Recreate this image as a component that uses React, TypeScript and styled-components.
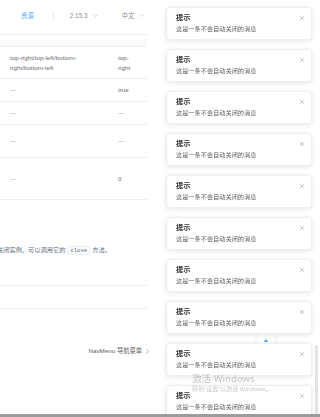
import React from "react";
import styled, { createGlobalStyle } from "styled-components";

const GlobalStyle = createGlobalStyle`
  html, body {
    margin: 0;
    padding: 0;
    background: #ffffff;
    overflow: hidden;
  }
  body {
    font-family: "Liberation Sans", Arial, "Noto Sans CJK SC", sans-serif;
    -webkit-font-smoothing: antialiased;
  }
  * { box-sizing: border-box; }
`;

const Page = styled.div`
  width: 320px;
  height: 417px;
  display: flex;
  flex-direction: row;
  overflow: hidden;
`;

const Main = styled.main`
  width: 147px;
  display: flex;
  flex-direction: column;
`;

/* ---------- header ---------- */
const Header = styled.header`
  height: 35px;
  border-bottom: 1px solid #ebeef5;
  display: flex;
  align-items: center;
  padding: 0 0 4px 21px;
  font-size: 6.4px;
`;

const NavLink = styled.span<{ $active?: boolean }>`
  color: ${(p) => (p.$active ? "#5aa9f5" : "#8a8f99")};
  white-space: nowrap;
`;

const NavSep = styled.span`
  width: 1px;
  height: 7px;
  background: #e4e7ed;
  margin: 0 16px 0 19px;
`;

const NavDrop = styled.span<{ $gap?: number }>`
  display: flex;
  align-items: center;
  gap: 5px;
  margin-right: ${(p) => p.$gap ?? 0}px;
`;

const Caret = () => (
  <svg width="5" height="3" viewBox="0 0 5 3">
    <polyline points="0.4,0.4 2.5,2.5 4.6,0.4" fill="none" stroke="#b4b8bf" strokeWidth="0.7" />
  </svg>
);

/* ---------- tables ---------- */
const Table = styled.div<{ $top: number }>`
  margin-top: ${(p) => p.$top}px;
  display: flex;
  flex-direction: column;
`;

const HeadBand = styled.div<{ $h: number; $bg?: string }>`
  height: ${(p) => p.$h}px;
  background: ${(p) => p.$bg ?? "transparent"};
  border-bottom: 1px solid #ebeef5;
`;

const Row = styled.div<{ $h: number }>`
  height: ${(p) => p.$h}px;
  display: grid;
  grid-template-columns: 108px 39px;
  align-items: center;
  border-bottom: 1px solid #ebeef5;
  font-size: 6.25px;
  line-height: 10px;
  color: #6b6e75;
`;

const Cell = styled.div<{ $pr: number }>`
  padding: 0 ${(p) => p.$pr}px 0 10px;
  overflow-wrap: break-word;
`;

const Dash = styled.span`
  color: #a0a3aa;
`;

/* ---------- paragraph ---------- */
const Para = styled.p`
  margin: 45px 0 0 -3px;
  white-space: nowrap;
  font-size: 6.23px;
  line-height: 10px;
  color: #5e6d82;
`;

const Code = styled.code`
  font-family: "Liberation Mono", Menlo, monospace;
  font-size: 5.6px;
  color: #5e6d82;
  background: #f9fafc;
  border: 1px solid #eaeefb;
  border-radius: 2px;
  padding: 0 2px;
  margin: 0 2px;
`;

/* ---------- footer nav ---------- */
const FooterNav = styled.div`
  margin-top: 37px;
  width: 149px;
  display: flex;
  justify-content: flex-end;
  align-items: center;
  gap: 4px;
  font-size: 6.25px;
  line-height: 10px;
  color: #606266;
`;

const RightArrow = () => (
  <svg width="3" height="5" viewBox="0 0 3 5">
    <polyline points="0.4,0.4 2.5,2.5 0.4,4.6" fill="none" stroke="#8a8f99" strokeWidth="0.7" />
  </svg>
);

/* ---------- overlays ---------- */
const BackTop = styled.div`
  position: fixed;
  left: 257px;
  top: 331px;
  width: 18px;
  height: 18px;
  border-radius: 50%;
  background: #fff;
  box-shadow: 0 0 4px rgba(0, 0, 0, 0.12);
  display: flex;
  align-items: center;
  justify-content: center;
  z-index: 1;
`;

const Stack = styled.div`
  position: fixed;
  top: 7px;
  right: 8px;
  width: 146px;
  display: flex;
  flex-direction: column;
  gap: 9px;
  z-index: 2;
`;

const Card = styled.div`
  height: 33px;
  flex: none;
  display: flex;
  align-items: flex-start;
  padding: 4px 7px 0 9px;
  background: #fff;
  border: 1px solid #ebeef5;
  border-radius: 4px;
  box-shadow: 0 1px 5px rgba(0, 0, 0, 0.1);
`;

const Group = styled.div`
  flex: 1;
  display: flex;
  flex-direction: column;
  gap: 2px;
`;

const Title = styled.div`
  font-family: "Noto Sans CJK SC", sans-serif;
  font-weight: 700;
  font-size: 7.2px;
  line-height: 10px;
  color: #303133;
`;

const Content = styled.div`
  font-family: "Noto Sans CJK SC", sans-serif;
  font-size: 6.2px;
  line-height: 9px;
  color: #606266;
  white-space: nowrap;
`;

const Close = styled.span`
  display: flex;
  margin-top: 4px;
`;

const CloseIcon = () => (
  <svg width="4" height="4" viewBox="0 0 4 4">
    <path d="M0.3 0.3L3.7 3.7M3.7 0.3L0.3 3.7" stroke="#a8abb2" strokeWidth="0.7" />
  </svg>
);

const ScrollThumb = styled.div`
  position: fixed;
  left: 315px;
  top: 345px;
  width: 3px;
  height: 70px;
  background: #e3e3e3;
  border-radius: 1px;
  z-index: 3;
`;

const Watermark = styled.div`
  position: fixed;
  left: 192px;
  top: 372px;
  display: flex;
  flex-direction: column;
  font-family: "Noto Sans", "Noto Sans CJK SC", sans-serif;
  color: rgba(150, 150, 150, 0.55);
  pointer-events: none;
  z-index: 4;
`;

const WmTitle = styled.span`
  font-size: 9.6px;
  line-height: 13px;
`;

const WmSub = styled.span`
  font-size: 6px;
  line-height: 9px;
  white-space: nowrap;
`;

const BottomEdge = styled.div`
  position: fixed;
  left: 0;
  right: 0;
  bottom: 0;
  height: 3px;
  background: #9c9c9c;
  z-index: 5;
`;

type RowData = { h: number; a: React.ReactNode; b: React.ReactNode };

const rows: RowData[] = [
  { h: 32, a: "top-right/top-left/bottom-right/bottom-left", b: "top-right" },
  { h: 23, a: <Dash>—</Dash>, b: "true" },
  { h: 23, a: <Dash>—</Dash>, b: <Dash>—</Dash> },
  { h: 33, a: <Dash>—</Dash>, b: <Dash>—</Dash> },
  { h: 42, a: <Dash>—</Dash>, b: "0" },
];

export default function App() {
  return (
    <>
      <GlobalStyle />
      <Page>
        <Main>
          <Header>
            <NavLink $active>资源</NavLink>
            <NavSep />
            <NavDrop $gap={24}>
              <NavLink>2.15.3</NavLink>
              <Caret />
            </NavDrop>
            <NavDrop>
              <NavLink>中文</NavLink>
              <Caret />
            </NavDrop>
          </Header>

          <Table $top={5}>
            <HeadBand $h={7} $bg="#fafafa" />
            {rows.map((r, i) => (
              <Row key={i} $h={r.h}>
                <Cell $pr={23}>{r.a}</Cell>
                <Cell $pr={8}>{r.b}</Cell>
              </Row>
            ))}
          </Table>

          <Para>
            关闭实例，可以调用它的<Code>close</Code>方法。
          </Para>

          <Table $top={15}>
            <HeadBand $h={15} />
            <Row $h={23}>
              <Cell $pr={23} />
              <Cell $pr={8} />
            </Row>
          </Table>

          <FooterNav>
            <span>NavMenu 导航菜单</span>
            <RightArrow />
          </FooterNav>
        </Main>
      </Page>

      <BackTop>
        <svg width="4" height="3" viewBox="0 0 4 3">
          <polygon points="2,0 4,3 0,3" fill="#409eff" />
        </svg>
      </BackTop>

      <Stack>
        {Array.from({ length: 10 }).map((_, i) => (
          <Card key={i}>
            <Group>
              <Title>提示</Title>
              <Content>这是一条不会自动关闭的消息</Content>
            </Group>
            <Close>
              <CloseIcon />
            </Close>
          </Card>
        ))}
      </Stack>

      <ScrollThumb />

      <Watermark>
        <WmTitle>激活 Windows</WmTitle>
        <WmSub>转到“设置”以激活 Windows。</WmSub>
      </Watermark>

      <BottomEdge />
    </>
  );
}
